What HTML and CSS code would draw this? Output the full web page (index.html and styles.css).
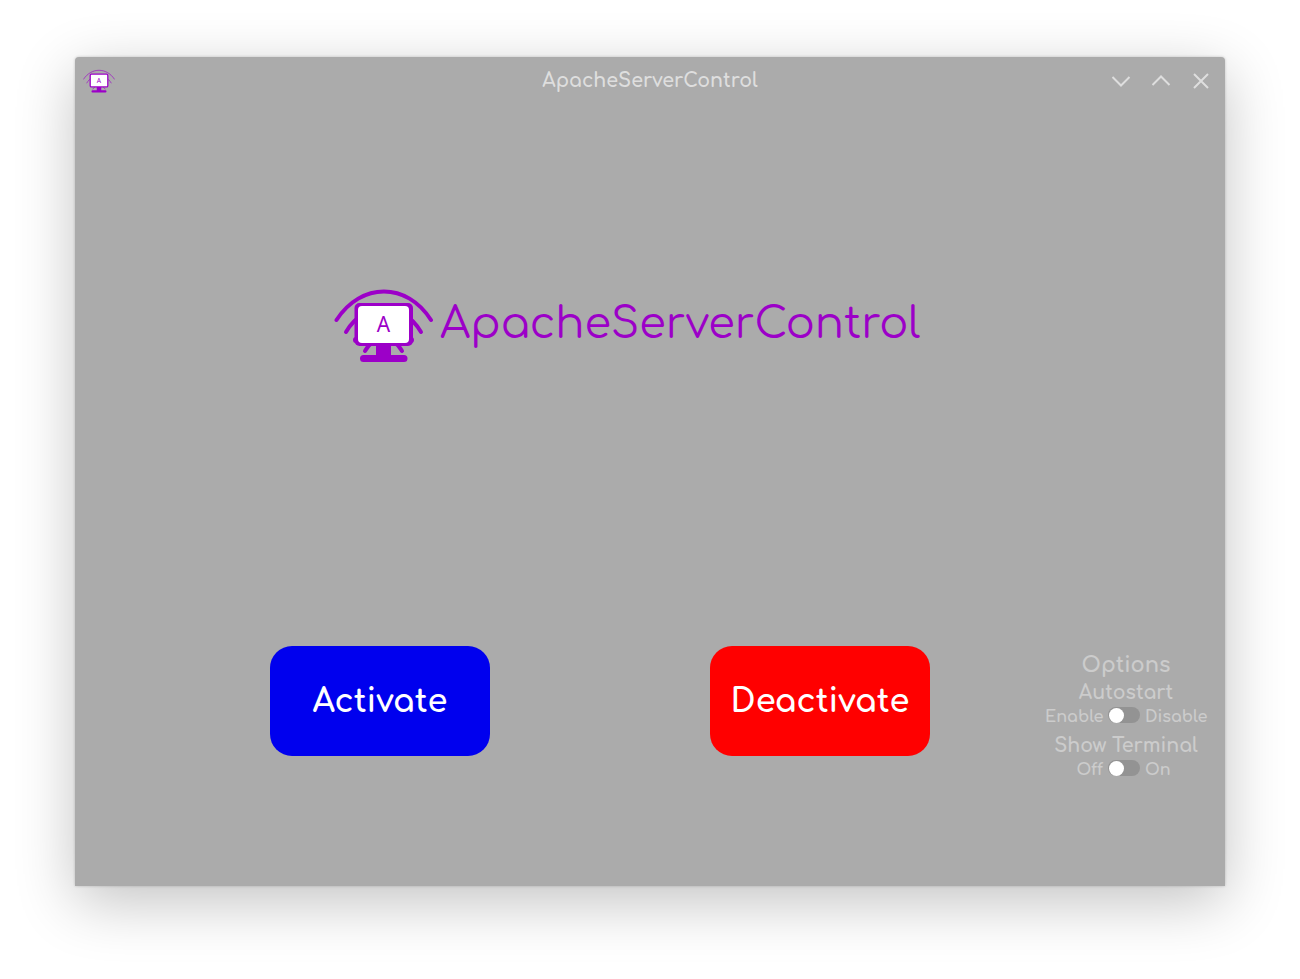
FILE: index.html
```html
<!DOCTYPE html>
<html lang="en">
<head>
<meta charset="utf-8">
<meta name="viewport" content="width=device-width, initial-scale=1">
<title>ApacheServerControl</title>
<link rel="stylesheet" href="styles.css">
</head>
<body>
<div class="window">
  <header class="titlebar">
    <svg class="app-icon" viewBox="0 0 100 74" aria-hidden="true">
      <g class="logo-waves thin">
        <path d="M2 31C26-6 74-6 98 31"/>
        <path d="M12 43C30 12 70 12 88 43"/>
        <path d="M31 62C40 46 60 46 69 62"/>
      </g>
      <path class="logo-stand" d="M43 54H57V66H70a3.500 3.500 0 0 1 0 7H30a3.500 3.500 0 0 1 0-7H43Z"/>
      <rect class="logo-screen" x="22.500" y="15.500" width="55" height="40" rx="4"/>
      <text x="50" y="43" text-anchor="middle" class="logo-letter">A</text>
    </svg>
    <span class="window-title">ApacheServerControl</span>
    <div class="window-actions">
      <button type="button" class="window-action" aria-label="Minimize"><svg viewBox="0 0 20 20"><path d="M1.500 6 10 14.500 18.500 6"/></svg></button>
      <button type="button" class="window-action" aria-label="Maximize"><svg viewBox="0 0 20 20"><path d="M1.500 14 10 5.500 18.500 14"/></svg></button>
      <button type="button" class="window-action" aria-label="Close"><svg viewBox="0 0 20 20"><path d="M3 3 17 17M17 3 3 17"/></svg></button>
    </div>
  </header>
  <main class="content">
    <div class="brand">
      <svg class="brand-logo" viewBox="0 0 100 74" aria-hidden="true">
        <g class="logo-waves">
          <path d="M2.500 31C27-7 73-7 97 31"/>
          <path d="M12 43C30 12 69 12 87 43"/>
          <path d="M22 51h4M73 51h4" stroke-width="6"/>
          <path d="M31 62C40 46 59 46 68 62"/>
        </g>
        <path class="logo-stand" d="M42 54H57V66H70a3.500 3.500 0 0 1 0 7H29.500a3.500 3.500 0 0 1 0-7H42Z"/>
        <rect x="20.500" y="14" width="58.500" height="43" rx="5" fill="#9c00c8"/>
        <rect x="24" y="17" width="51" height="37" rx="4" fill="#fff"/>
        <text x="49.500" y="43" text-anchor="middle" class="logo-letter">A</text>
      </svg>
      <h1 class="brand-name">ApacheServerControl</h1>
    </div>
    <div class="controls">
      <button type="button" class="action activate">Activate</button>
      <button type="button" class="action deactivate">Deactivate</button>
      <section class="options">
        <h2 class="options-title">Options</h2>
        <h3 class="option-name" id="autostart-name">Autostart</h3>
        <label class="option"><span class="before">Enable</span><input type="checkbox" class="switch" aria-describedby="autostart-name"><span>Disable</span></label>
        <h3 class="option-name terminal-name" id="terminal-name">Show Terminal</h3>
        <label class="option"><span class="before">Off</span><input type="checkbox" class="switch" aria-describedby="terminal-name"><span>On</span></label>
      </section>
    </div>
  </main>
</div>
</body>
</html>
```
FILE: styles.css
```css
* { box-sizing: border-box; }
body {
  margin: 0;
  min-height: 100vh;
  padding: 57px 75px 93px;
  display: flex;
  background: #fff;
  font-family: Comfortaa, Quicksand, Lato, sans-serif;
}
button { font: inherit; border: 0; cursor: pointer; }
h1, h2, h3 { margin: 0; font-weight: 400; }
.logo-letter { font: 21px "Noto Sans", sans-serif; fill: #9c00c8; }
.logo-waves { fill: none; stroke: #9c00c8; stroke-width: 4; stroke-linecap: round; }
.thin { stroke-width: 2; }
.logo-stand { fill: #9c00c8; }
.logo-screen { fill: #fff; stroke: #9c00c8; stroke-width: 4; }
.window {
  flex: 1;
  display: flex;
  flex-direction: column;
  background: #ababab;
  border-radius: 4px 4px 0 0;
  box-shadow: 0 16px 60px rgba(0, 0, 0, .24), 0 0 3px rgba(0, 0, 0, .2);
}
.titlebar {
  height: 48px;
  padding: 0 14px 0 8px;
  display: grid;
  grid-template-columns: 1fr auto 1fr;
  align-items: center;
  color: #dedede;
}
.app-icon { width: 32px; height: 24px; }
.window-title { font-size: 19px; line-height: 28px; font-weight: 700; padding-left: 6px; }
.window-actions { display: flex; justify-content: flex-end; gap: 20px; }
.window-action { width: 20px; height: 20px; padding: 0; background: none; color: inherit; }
.window-action svg { display: block; fill: none; stroke: currentColor; stroke-width: 2; }
.content {
  flex: 1;
  display: flex;
  flex-direction: column;
  justify-content: space-between;
  padding: 184px 18px 105px 195px;
}
.brand { display: flex; align-items: flex-start; gap: 6px; padding-left: 64px; color: #9c00c8; }
.brand-logo { width: 100px; height: 74px; flex: none; }
.brand-name { font-size: 43px; line-height: 70px; }
.controls { display: flex; align-items: flex-start; }
.action { width: 220px; height: 110px; padding: 0; border-radius: 22px; color: #fff; font-size: 32px; font-weight: 700; }
.activate { background: #00e; }
.deactivate { background: #f00; margin-left: 220px; }
.options { margin-left: auto; padding-top: 5px; color: #ccc; text-align: center; }
.options-title { font-size: 21px; line-height: 28px; font-weight: 700; }
.option-name { font-size: 19px; line-height: 28px; font-weight: 700; }
.terminal-name { margin-top: 4px; }
.option { display: grid; grid-template-columns: 58px 32px 62px; gap: 5px; align-items: start; font-size: 16px; line-height: 21px; font-weight: 700; text-align: left; }
.before { text-align: right; }
.switch { appearance: none; display: flex; align-items: center; width: 32px; height: 16px; margin: 0; padding: 0 1px; border-radius: 8px; background: #939393; cursor: pointer; }
.switch::before { content: ""; width: 15px; height: 15px; border-radius: 50%; background: #fff; }
.switch:checked::before { margin-left: auto; }
```
